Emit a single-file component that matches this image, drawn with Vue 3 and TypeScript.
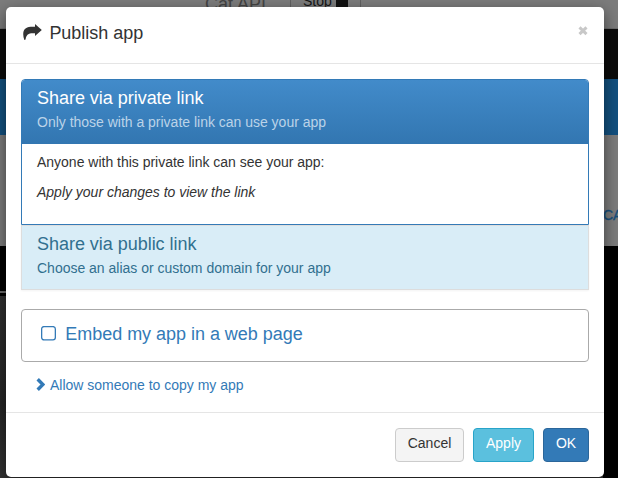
<script setup lang="ts">
import { ref } from 'vue'

interface FooterButton {
  label: string
  kind: string
}

const embedded = ref<boolean>(false)
const buttons: FooterButton[] = [
  { label: 'Cancel', kind: 'default' },
  { label: 'Apply', kind: 'info' },
  { label: 'OK', kind: 'primary' },
]
</script>

<template>
  <div class="screen">
    <div class="page" aria-hidden="true">
      <div class="top"><span class="name">Cat API</span><span class="stop">Stop<i></i></span></div>
      <div class="black"></div>
      <div class="blue"></div>
      <div class="grey"><span>CA</span></div>
      <div class="bottom"><div class="preview"></div></div>
    </div>

    <section class="modal" role="dialog">
      <header class="head">
        <svg class="share" width="19" height="17" viewBox="0 0 19 17">
          <path d="M12 0 18.8 6.1 12 12V9.3C6.4 8.8 3.3 9.8 2.6 15.4L1.3 16C-1 9.4 0.1 3.1 7.6 2.8L12 2.7Z" />
        </svg>
        <h4>Publish app</h4>
        <button class="close" aria-label="Close">
          <svg width="10" height="10" viewBox="0 0 10 10"><path d="M1.5 1.3 8.5 8.1M8.5 1.3 1.5 8.1" /></svg>
        </button>
      </header>

      <main class="body">
        <div class="private">
          <div class="private-head">
            <h4>Share via private link</h4>
            <p>Only those with a private link can use your app</p>
          </div>
          <div class="private-body">
            <p>Anyone with this private link can see your app:</p>
            <p class="hint">Apply your changes to view the link</p>
          </div>
        </div>
        <div class="public">
          <h4>Share via public link</h4>
          <p>Choose an alias or custom domain for your app</p>
        </div>
        <div class="embed" @click="embedded = !embedded">
          <svg width="15" height="15" viewBox="0 0 15 15">
            <rect x="0.65" y="0.6" width="13.7" height="13.3" rx="2.4" />
            <path v-if="embedded" d="M3.5 7.5 6.5 10.5 11.5 4.5" />
          </svg>
          <h4>Embed my app in a web page</h4>
        </div>
        <a class="copy">
          <svg width="9" height="13" viewBox="0 0 9 13"><path d="M1.7 1.3 6.9 6.5 1.7 11.7" /></svg>
          <span>Allow someone to copy my app</span>
        </a>
      </main>

      <footer class="foot">
        <button v-for="b in buttons" :key="b.label" class="btn" :class="b.kind">{{ b.label }}</button>
      </footer>
    </section>
  </div>
</template>

<style>
body {
  margin: 0;
  overflow: hidden;
}
</style>

<style scoped>
* {
  box-sizing: border-box;
}
.screen {
  position: relative;
  width: 618px;
  height: 478px;
  overflow: hidden;
  font-family: "Liberation Sans", Arial, sans-serif;
  font-size: 14px;
  line-height: 20px;
  letter-spacing: -0.01px;
  color: #333;
}
h4, p {
  margin: 0;
  font-weight: 400;
  white-space: nowrap;
}
h4 {
  font-size: 18px;
  line-height: 20px;
  letter-spacing: -0.03px;
}
.page {
  height: 478px;
  background: #000;
}
.top {
  display: flex;
  height: 29px;
  background: #7c7c7c;
  border-bottom: 1px solid #6b6b6b;
}
.name {
  margin: -6px 0 0 205px;
  width: 85px;
  font-size: 18px;
  color: #444;
}
.stop {
  display: flex;
  gap: 4px;
  width: 71px;
  height: 20px;
  margin-top: -9px;
  padding-left: 12px;
  border: solid #606060;
  border-width: 0 1px;
  color: #151515;
}
.stop i {
  width: 12px;
  background: #111;
}
.black {
  height: 50px;
  background: #0c0c0c;
}
.blue {
  height: 56px;
  background: #12507f;
}
.grey {
  height: 111px;
  padding: 70px 0 0 603px;
  background: #7c7c7c;
  color: #164f7c;
  -webkit-text-stroke: 0.4px #164f7c;
}
.bottom {
  height: 232px;
  padding-top: 45px;
}
.preview {
  width: 603px;
  height: 187px;
  border-top: 2px solid #6a6a6a;
  background: linear-gradient(#000 3px, #303030 3px, #262626 60%, #343434);
}
.modal {
  position: absolute;
  top: 7px;
  left: 6px;
  width: 598px;
  height: 470px;
  border-radius: 5px;
  background: #fff;
  box-shadow: 0 5px 15px rgba(0, 0, 0, 0.5);
}
.head {
  display: flex;
  height: 57px;
  padding: 16px 16px 0 17px;
  border-bottom: 1px solid #e5e5e5;
}
.share {
  margin-top: 1px;
  fill: #333;
}
.head h4 {
  margin-left: 7.4px;
}
.close {
  display: flex;
  height: 10px;
  margin: 3px 0 0 auto;
  padding: 0;
  border: 0;
  background: none;
}
.close path {
  fill: none;
  stroke: #c8c8c8;
  stroke-width: 3;
}
.body {
  height: 348px;
  padding: 15px 15px 0;
}
.private {
  height: 146px;
  border: 1px solid #337ab7;
  border-radius: 4px 4px 0 0;
  overflow: hidden;
}
.private-head {
  height: 64px;
  padding: 8px 15px 0;
  background: linear-gradient(#428bca, #3276b1);
  color: #fff;
}
.private-head p {
  margin-top: 4px;
  color: #bbd3e8;
}
.private-body {
  padding: 8px 15px 0;
}
.hint {
  margin-top: 10px;
  font-style: italic;
}
.public {
  height: 65px;
  padding: 8px 15px 0;
  border: 1px solid #ddd;
  background: #d9edf7;
  color: #31708f;
  box-shadow: 0 1px 2px rgba(0, 0, 0, 0.05);
}
.public p {
  margin-top: 4px;
}
.embed {
  display: flex;
  height: 53px;
  margin-top: 19px;
  padding: 14px 19px 0;
  border: 1px solid #aaa;
  border-radius: 4px;
  color: #337ab7;
}
.embed svg {
  margin-top: 2px;
  fill: none;
  stroke: #337ab7;
  stroke-width: 1.3;
}
.embed h4 {
  margin-left: 9.3px;
}
.copy {
  display: flex;
  margin: 13px 0 0 15px;
  color: #337ab7;
}
.copy svg {
  margin-top: 3px;
  fill: none;
  stroke: #337ab7;
  stroke-width: 3.4;
}
.copy span {
  margin-left: 5px;
}
.foot {
  display: flex;
  justify-content: flex-end;
  gap: 9px;
  height: 65px;
  padding: 15px 15px 0;
  border-top: 1px solid #e5e5e5;
}
.btn {
  height: 34px;
  padding: 0 0 4px;
  border: 1px solid;
  border-radius: 4px;
  font: 14px/20px "Liberation Sans", Arial, sans-serif;
}
.default {
  width: 69px;
  border-color: #ccc;
  background: #f4f4f4;
  color: #333;
}
.info {
  width: 61px;
  border-color: #28a4c9;
  background: #5bc0de;
  color: #fff;
}
.primary {
  width: 46px;
  border-color: #2b669a;
  background: #337ab7;
  color: #fff;
}
</style>
